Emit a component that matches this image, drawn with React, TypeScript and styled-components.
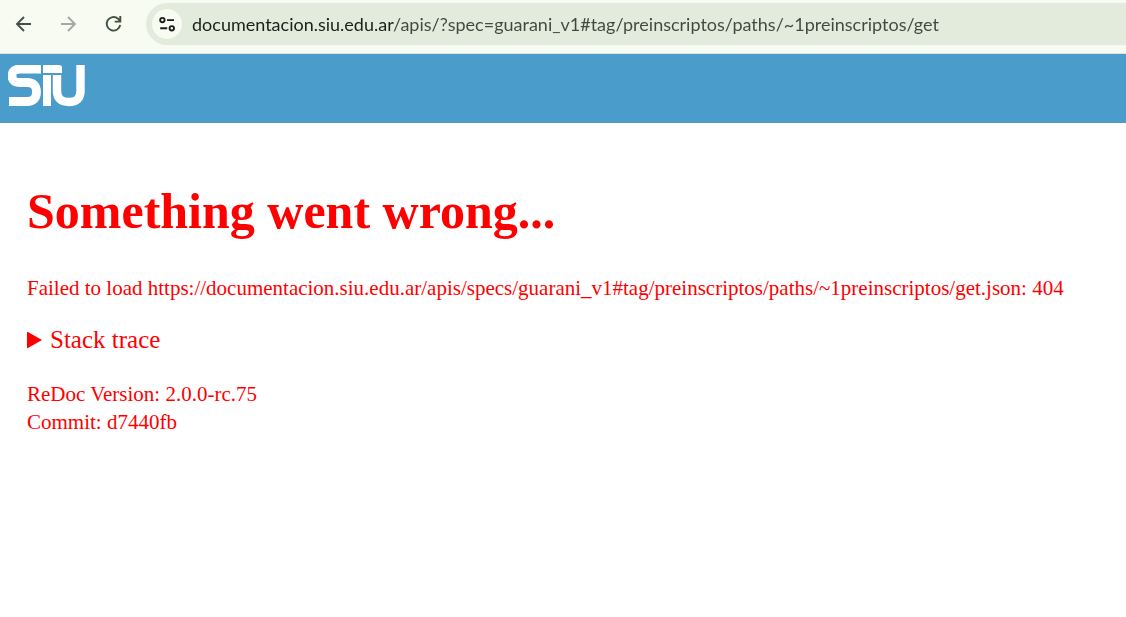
import React from "react";
import styled, { createGlobalStyle } from "styled-components";

const GlobalStyle = createGlobalStyle`
  * { box-sizing: border-box; }
  body { margin: 0; background: #ffffff; }
`;

const Toolbar = styled.header`
  display: flex;
  align-items: center;
  height: 54px;
  padding: 3px 0 8px 7px;
  background: #f8fbf1;
  border-bottom: 1px solid #dfe4da;
`;

const Navigation = styled.nav`
  display: flex;
  gap: 13px;
  margin-right: 17px;
`;

const NavButton = styled.button`
  display: flex;
  align-items: center;
  justify-content: center;
  width: 32px;
  height: 32px;
  padding: 0;
  border: 0;
  background: transparent;
  color: #43513e;

  &:disabled { color: #a5aaa0; }
`;

const AddressBar = styled.form`
  display: flex;
  flex: 1;
  align-items: center;
  gap: 10px;
  min-width: 0;
  height: 42px;
  padding-left: 6px;
  border-radius: 21px 0 0 21px;
  background: #e3ebdc;
`;

const SiteInfoButton = styled.button`
  display: flex;
  flex: none;
  align-items: center;
  justify-content: center;
  width: 30px;
  height: 30px;
  padding: 0;
  border: 0;
  border-radius: 50%;
  background: #f8fbf1;
  color: #1b1f19;
`;

/* The host part of the address is darker than its path. */
const AddressInput = styled.input`
  flex: 1;
  min-width: 0;
  height: 30px;
  padding: 0;
  border: 0;
  outline: 0;
  font: 18px Lato, sans-serif;
  color: #42473f;
  -webkit-text-fill-color: transparent;
  background: linear-gradient(to right, #1b1f19 202px, #42473f 202px);
  background-clip: text;
`;

const Banner = styled.div`
  padding: 11px 8px 16px;
  background: #4a9cca;
`;

const LogoLink = styled.a`
  display: block;
  width: 78px;
  height: 42px;
`;

const ErrorPanel = styled.main`
  padding: 60px 27px;
  font-family: "Liberation Serif", serif;
  font-size: 21px;
  line-height: 28px;
  color: #ff0000;
`;

const Title = styled.h1`
  margin: 0 0 35px;
  font-size: 50px;
  line-height: 56px;
`;

const Message = styled.p`
  margin: 0 0 24px;
  overflow-wrap: anywhere;
`;

const StackTrace = styled.details`
  margin-bottom: 26px;
  font-size: 25px;
`;

const StackSummary = styled.summary`
  display: flex;
  align-items: center;
  gap: 8px;
  list-style: none;

  &::before {
    content: "";
    width: 15px;
    height: 17px;
    background: currentColor;
    clip-path: polygon(0 0, 100% 50%, 0 100%);
  }

  details[open] > &::before { transform: rotate(90deg); }
`;

const Info = styled.small`
  display: block;
  font-size: 21px;
`;

function Icon({ size = 20, children }: { size?: number; children: React.ReactNode }) {
  return (
    <svg width={size} height={size} viewBox="0 0 20 20" fill="none" stroke="currentColor" strokeWidth="1.9" aria-hidden="true">
      {children}
    </svg>
  );
}

export default function App() {
  return (
    <>
      <GlobalStyle />
      <Toolbar>
        <Navigation aria-label="Browser">
          <NavButton aria-label="Back">
            <Icon><path d="M18 10H4M11 3l-7 7 7 7" /></Icon>
          </NavButton>
          <NavButton aria-label="Forward" disabled>
            <Icon><path d="M3 10h14M10 3l7 7-7 7" /></Icon>
          </NavButton>
          <NavButton aria-label="Reload">
            <Icon><path d="M17.2 11A6.8 6.8 0 1 1 15 4.7L17 6.8M17.3 2v5.6h-5.6" /></Icon>
          </NavButton>
        </Navigation>
        <AddressBar onSubmit={(event) => event.preventDefault()}>
          <SiteInfoButton type="button" aria-label="View site information">
            <Icon>
              <circle cx="5.4" cy="6.1" r="2.2" />
              <path d="M10 6.1h7M3.2 14.3h7" />
              <circle cx="14.8" cy="14.3" r="2.2" />
            </Icon>
          </SiteInfoButton>
          <AddressInput
            aria-label="Address"
            type="text"
            spellCheck={false}
            defaultValue="documentacion.siu.edu.ar/apis/?spec=guarani_v1#tag/preinscriptos/paths/~1preinscriptos/get"
          />
        </AddressBar>
      </Toolbar>
      <Banner>
        <LogoLink href="#" aria-label="SIU">
          <svg width="78" height="42" viewBox="0 0 78 42" fill="none" stroke="#ffffff" strokeWidth="8">
            <path d="M33 4H12Q4 4 4 11Q4 17.500 12 17.500H19Q28.500 17.500 28.500 27Q28.500 36.500 19 36.500H1" strokeWidth="8.8" />
            <path d="M35 0H51Q54 0 54 3V8H35Z" fill="#ffffff" stroke="none" />
            <path d="M39 10V41" />
            <path d="M49 10V26Q49 37 61 37Q72.500 37 72.500 26V0" strokeWidth="8.400" />
          </svg>
        </LogoLink>
      </Banner>
      <ErrorPanel>
        <Title>Something went wrong...</Title>
        <Message>
          Failed to load https://documentacion.siu.edu.ar/apis/specs/guarani_v1#tag/preinscriptos/paths/~1preinscriptos/get.json: 404
        </Message>
        <StackTrace>
          <StackSummary>Stack trace</StackSummary>
        </StackTrace>
        <Info>ReDoc Version: 2.0.0-rc.75</Info>
        <Info>Commit: d7440fb</Info>
      </ErrorPanel>
    </>
  );
}
